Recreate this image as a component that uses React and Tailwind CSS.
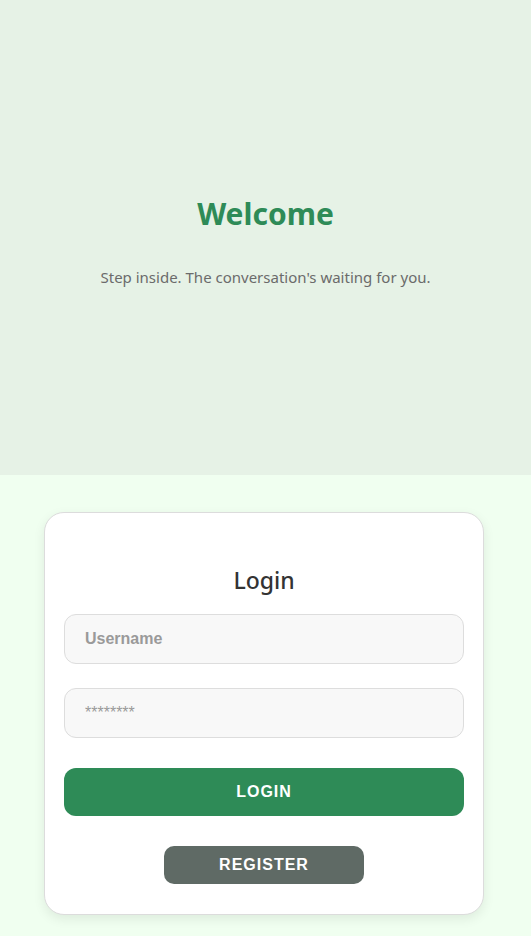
export default function App() {
  return (
    <div className="min-h-[936px] bg-[#f0fff0]" style={{ fontFamily: '"Noto Sans", "Open Sans", sans-serif' }}>
      <section className="h-[475px] bg-[#e6f2e6] flex flex-col items-center justify-center pt-[6px]">
        <h1 className="text-[30px] font-bold text-[#2e8b57] leading-[40px]">Welcome</h1>
        <p className="mt-[32px] text-[15px] text-[#6b6b6b] leading-[22px]">
          Step inside. The conversation's waiting for you.
        </p>
      </section>

      <div className="pt-[37px] pb-[22px]">
        <div className="ml-[44px] w-[440px] bg-white border border-[#dcdcdc] rounded-[20px] shadow-[0_4px_12px_rgba(0,0,0,0.08)] px-[19px] pt-[50px] pb-[30px] flex flex-col items-center">
          <h2 className="text-[23px] font-medium text-[#333] leading-[34px]">Login</h2>
          <input
            className="mt-[17px] w-full h-[50px] rounded-[12px] border border-[#dddddd] bg-[#f8f8f8] px-[20px] text-[16px] font-bold placeholder:text-[#9a9a9a] outline-none"
            style={{ fontFamily: '"Liberation Sans", Arial, sans-serif' }}
            placeholder="Username"
          />
          <input
            type="password"
            className="mt-[24px] w-full h-[50px] rounded-[12px] border border-[#dddddd] bg-[#f8f8f8] px-[20px] text-[16px] placeholder:text-[#9a9a9a] outline-none"
            style={{ fontFamily: '"Liberation Sans", Arial, sans-serif' }}
            placeholder="********"
          />
          <button
            className="mt-[30px] w-full h-[48px] rounded-[12px] bg-[#2e8b57] text-white text-[16px] font-bold tracking-[1px]"
            style={{ fontFamily: '"Liberation Sans", Arial, sans-serif' }}
          >
            LOGIN
          </button>
          <button
            className="mt-[30px] w-[200px] h-[38px] rounded-[10px] bg-[#5f6a65] text-white text-[16px] font-bold tracking-[1px]"
            style={{ fontFamily: '"Liberation Sans", Arial, sans-serif' }}
          >
            REGISTER
          </button>
        </div>
      </div>
    </div>
  );
}
